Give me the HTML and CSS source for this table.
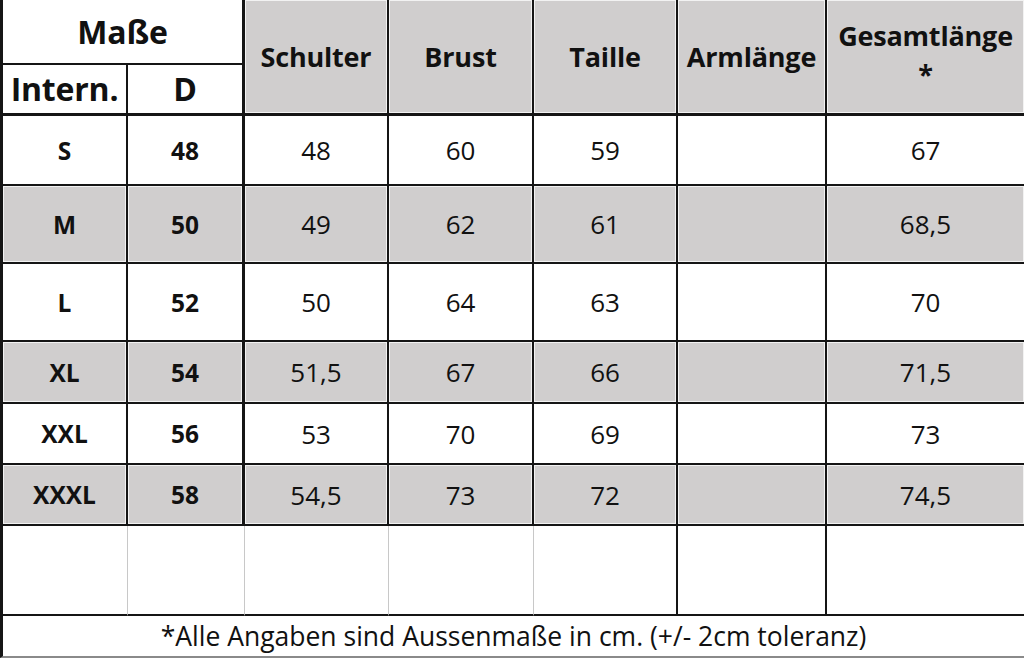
FILE: index.html
```html
<!DOCTYPE html>
<html lang="de">
<head>
<meta charset="utf-8">
<title>Maße</title>
<link rel="stylesheet" href="styles.css">
</head>
<body>
<table class="chart">
  <colgroup>
    <col class="c0"><col class="c1"><col class="c2"><col class="c3"><col class="c4"><col class="c5"><col class="c6">
  </colgroup>
  <thead>
    <tr class="h1">
      <th colspan="2" class="big first sep">Maße</th>
      <th rowspan="2" class="grey hb">Schulter</th>
      <th rowspan="2" class="grey hb">Brust</th>
      <th rowspan="2" class="grey hb">Taille</th>
      <th rowspan="2" class="grey hb">Armlänge</th>
      <th rowspan="2" class="grey hb last total">Gesamtlänge<br>*</th>
    </tr>
    <tr class="h2">
      <th class="big first hb">Intern.</th>
      <th class="big hb sep">D</th>
    </tr>
  </thead>
  <tbody>
    <tr class="r-s"><td class="first b">S</td><td class="b sep">48</td><td>48</td><td>60</td><td>59</td><td></td><td class="last">67</td></tr>
    <tr class="r-m grey"><td class="first b">M</td><td class="b sep">50</td><td>49</td><td>62</td><td>61</td><td></td><td class="last">68,5</td></tr>
    <tr class="r-l"><td class="first b">L</td><td class="b sep">52</td><td>50</td><td>64</td><td>63</td><td></td><td class="last">70</td></tr>
    <tr class="r-xl grey"><td class="first b">XL</td><td class="b sep">54</td><td>51,5</td><td>67</td><td>66</td><td></td><td class="last">71,5</td></tr>
    <tr class="r-xxl"><td class="first b">XXL</td><td class="b sep">56</td><td>53</td><td>70</td><td>69</td><td></td><td class="last">73</td></tr>
    <tr class="r-xxxl grey"><td class="first b">XXXL</td><td class="b sep">58</td><td>54,5</td><td>73</td><td>72</td><td></td><td class="last">74,5</td></tr>
    <tr class="r-empty"><td class="first light"></td><td class="light"></td><td class="light"></td><td class="light"></td><td></td><td></td><td class="last"></td></tr>
  </tbody>
  <tfoot>
    <tr class="r-foot"><td colspan="7" class="first last note">*Alle Angaben sind Aussenmaße in cm. (+/- 2cm toleranz)</td></tr>
  </tfoot>
</table>
</body>
</html>
```

FILE: styles.css
```css
html, body {
  margin: 0;
  padding: 0;
  background: #ffffff;
}

body {
  width: 1024px;
  height: 658px;
  overflow: hidden;
}

.chart {
  width: 1024px;
  table-layout: fixed;
  border-collapse: separate;
  border-spacing: 0;
  font-family: "Open Sans", Lato, sans-serif;
  color: #111111;
}

.c0 { width: 128px; }
.c1 { width: 117px; }
.c2 { width: 144px; }
.c3 { width: 145px; }
.c4 { width: 144px; }
.c5 { width: 149px; }
.c6 { width: 197px; }

.chart th,
.chart td {
  box-sizing: border-box;
  padding: 0;
  text-align: center;
  vertical-align: middle;
  border-right: 2px solid #151515;
  border-bottom: 2px solid #151515;
  font-size: 26px;
  font-weight: 400;
}

.chart th {
  font-weight: 700;
  font-size: 27px;
  line-height: 38px;
  letter-spacing: -0.2px;
}

.chart th.total {
  padding-bottom: 4px;
}

.chart .first { border-left: 3px solid #151515; }
.chart .last { border-right: none; }
.chart .sep { border-right-width: 3px; }
.chart .hb { border-bottom-width: 3px; }

.chart .big {
  font-size: 32px;
  background: #ffffff;
}

.grey,
.grey td {
  background: #d0cece;
  box-shadow: inset 0 0 0 1px #f2f2f2;
}

.chart .b {
  font-weight: 700;
  font-size: 24.5px;
}

.h1 { height: 65px; }
.h2 { height: 51px; }
.r-s { height: 70px; }
.r-m { height: 78px; }
.r-l { height: 78px; }
.r-xl { height: 62px; }
.r-xxl { height: 61px; }
.r-xxxl { height: 61px; }
.r-empty { height: 90px; }
.r-foot { height: 42px; }

.chart .light { border-right: 1px solid #c8c8c8; }
.chart td.first.light { border-left: 3px solid #151515; }

.chart .note {
  font-size: 26.5px;
  border-bottom: 2px solid #8a8a8a;
}
```
